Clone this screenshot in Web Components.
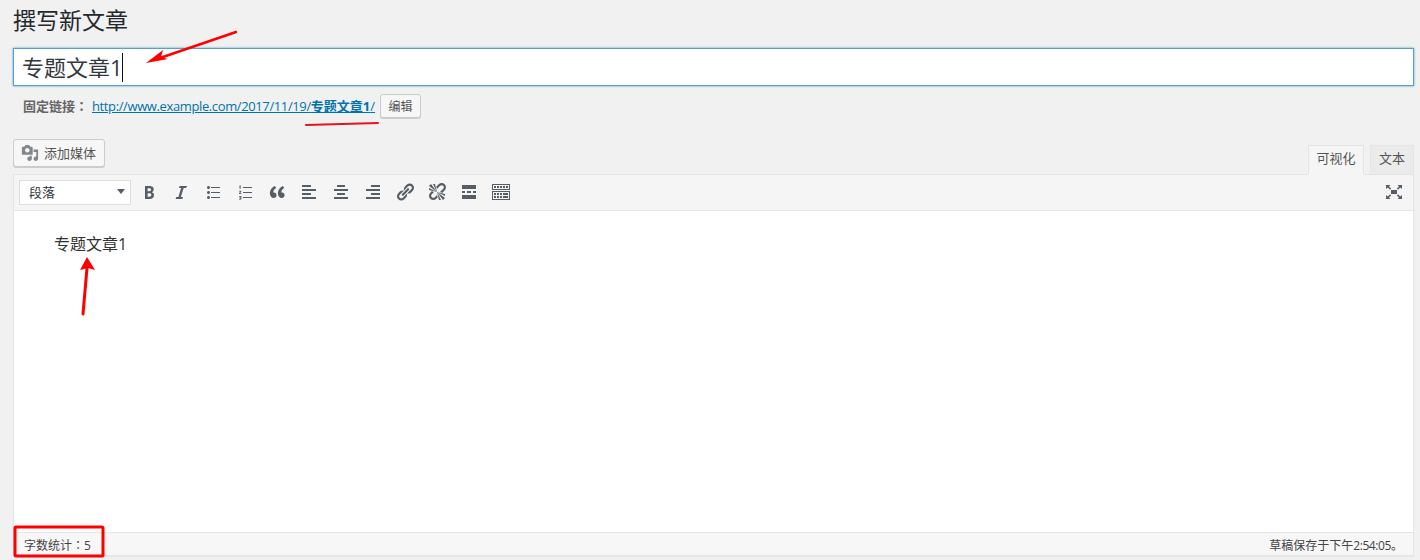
<!DOCTYPE html>
<html lang="zh-CN">
<head>
<meta charset="utf-8">
<title>撰写新文章</title>
<style>
    html, body {
        margin: 0;
        height: 100%;
        background: #f1f1f1;
    }

    body {
        position: relative;
        overflow: hidden;
        color: #444;
        font-family: "Open Sans", "Noto Sans CJK SC", sans-serif;
        font-size: 13px;
    }
</style>
</head>
<body>
<post-page>
    <span slot="heading">撰写新文章</span>
    <post-title>专题文章1</post-title>
    <perma-link base="http://www.example.com/2017/11/19/" slug="专题文章1"></perma-link>
    <post-editor>专题文章1</post-editor>
</post-page>
<red-marks></red-marks>

<script>
// dashicons, 20x20 viewBox
const ICONS = {
    media: 'M13 11V4c0-.55-.45-1-1-1h-1.67L9 1H5L3.67 3H2c-.55 0-1 .45-1 1v7c0 .55.45 1 1 1h10c.55 0 1-.45 1-1zM7 4.5c1.38 0 2.5 1.12 2.5 2.5S8.38 9.5 7 9.5 4.5 8.38 4.5 7 5.62 4.5 7 4.5zM14 6h5v10.5c0 1.38-1.12 2.5-2.5 2.5S14 17.88 14 16.5s1.12-2.5 2.5-2.5c.17 0 .34.02.5.05V9h-3V6zm-4 8.05V13h2v3.5c0 1.38-1.12 2.5-2.5 2.5S7 17.88 7 16.5 8.12 14 9.5 14c.17 0 .34.02.5.05z',
    bold: 'M6 4v13h4.54c1.37 0 2.46-.33 3.26-1 .8-.66 1.2-1.58 1.2-2.77 0-.84-.17-1.51-.51-2.01s-.9-.85-1.67-1.03v-.09c.57-.1 1.02-.4 1.36-.9s.51-1.13.51-1.91c0-1.14-.39-1.98-1.17-2.5C12.75 4.26 11.5 4 9.78 4H6zm2.57 5.15V6.26h1.36c.73 0 1.27.11 1.61.32.34.22.51.58.51 1.07 0 .54-.16.92-.47 1.15s-.82.35-1.51.35h-1.5zm0 2.19h1.6c1.44 0 2.16.53 2.16 1.61 0 .6-.17 1.05-.51 1.34s-.86.43-1.57.43H8.57v-3.38z',
    italic: 'M14.78 6h-2.13l-2.8 9h2.12l-.62 2H4.6l.62-2h2.14l2.8-9H8.03l.62-2h7.75z',
    ul: 'M5.5 7C4.67 7 4 6.33 4 5.5 4 4.68 4.67 4 5.5 4 6.32 4 7 4.68 7 5.5 7 6.33 6.32 7 5.5 7zM8 5h9v1H8V5zm-2.5 7c-.83 0-1.5-.67-1.5-1.5C4 9.68 4.67 9 5.5 9c.82 0 1.5.68 1.5 1.5 0 .83-.68 1.5-1.5 1.5zM8 10h9v1H8v-1zm-2.5 7c-.83 0-1.5-.67-1.5-1.5 0-.82.67-1.5 1.5-1.5.82 0 1.5.68 1.5 1.5 0 .83-.68 1.5-1.5 1.5zM8 15h9v1H8v-1z',
    ol: 'M8 5h9v1H8V5zm0 5h9v1H8v-1zm0 5h9v1H8v-1zM4.5 3.5h1.2v3.2H4.5V3.5zM4 8.8h2.4v.8L5 11.2h1.5v.8H4v-.8l1.4-1.6H4v-.8zM4 14h2.4v3.4H4v-.8h1.4v-.5H4.6v-.7h.8v-.6H4V14z',
    quote: 'M9.49 13.22c0-.74-.2-1.38-.61-1.9-.62-.78-1.83-.88-2.53-.72-.29-1.65 1.11-3.75 2.92-4.65L7.88 4c-2.73 1.3-5.42 4.28-4.96 8.05C3.21 14.43 4.59 16 6.54 16c.85 0 1.56-.25 2.12-.75s.83-1.18.83-2.03zm8.05 0c0-.74-.2-1.38-.61-1.9-.63-.78-1.83-.88-2.53-.72-.29-1.65 1.11-3.75 2.92-4.65L15.93 4c-2.73 1.3-5.42 4.28-4.96 8.05.29 2.38 1.67 3.95 3.62 3.95.85 0 1.56-.25 2.12-.75s.83-1.18.83-2.03z',
    left: 'M12 5V3H3v2h9zm5 4V7H3v2h14zm-5 4v-2H3v2h9zm5 4v-2H3v2h14z',
    center: 'M14 5V3H6v2h8zm3 4V7H3v2h14zm-3 4v-2H6v2h8zm3 4v-2H3v2h14z',
    right: 'M17 5V3H8v2h9zm0 4V7H3v2h14zm0 4v-2H8v2h9zm0 4v-2H3v2h14z',
    link: 'M17.74 2.76c1.68 1.69 1.68 4.41 0 6.1l-1.53 1.52c-1.12 1.12-2.7 1.47-4.14 1.09l2.62-2.61.76-.77.76-.76c.84-.84.84-2.2 0-3.04-.84-.85-2.2-.85-3.04 0l-.77.76-3.38 3.38c-.37-1.44-.02-3.02 1.1-4.14l1.52-1.53c1.69-1.68 4.42-1.68 6.1 0zM8.59 13.43l5.34-5.34c.42-.42.42-1.1 0-1.52-.44-.43-1.13-.39-1.53 0l-5.33 5.34c-.42.42-.42 1.1 0 1.52.44.43 1.13.39 1.52 0zm-.76 2.29l4.14-4.15c.38 1.44.03 3.02-1.09 4.14l-1.52 1.53c-1.69 1.68-4.41 1.68-6.1 0-1.68-1.68-1.68-4.42 0-6.1l1.53-1.52c1.12-1.12 2.7-1.47 4.14-1.1l-4.14 4.15c-.85.84-.85 2.2 0 3.05.84.84 2.2.84 3.04 0z',
    unlink: 'M17.74 2.26c1.68 1.69 1.68 4.41 0 6.1l-1.53 1.52c-.32.33-.69.58-1.08.77L13 10l1.69-1.64.76-.77.76-.76c.84-.84.84-2.2 0-3.04-.84-.85-2.2-.85-3.04 0l-.77.76-.76.76L10 7l-.65-2.14c.19-.38.44-.75.77-1.07l1.52-1.53c1.69-1.68 4.42-1.68 6.1 0zM2 4l8 6-6-8zm4-2l4 8-2-8H6zM2 6l8 4-8-2V6zm7.36 7.69L10 13l.74 2.35-1.38 1.39c-1.69 1.68-4.41 1.68-6.1 0-1.68-1.68-1.68-4.42 0-6.1l1.39-1.38L7 10l-.69.64-1.52 1.53c-.85.84-.85 2.2 0 3.04.84.85 2.2.85 3.04 0zM18 16l-8-6 6 8zm-4 2l-4-8 2 8h2zm4-4l-8-4 8 2v2z',
    more: 'M17 7V3H3v4h14zM6 11V9H3v2h3zm6 0V9H8v2h4zm5 0V9h-3v2h3zm0 6v-4H3v4h14z',
    sink: 'M19 2v6H1V2h18zm-1 5V3H2v4h16zM5 4v2H3V4h2zm3 0v2H6V4h2zm3 0v2H9V4h2zm3 0v2h-2V4h2zm3 0v2h-2V4h2zm2 5v9H1V9h18zm-1 8v-7H2v7h16zM5 11v2H3v-2h2zm3 0v2H6v-2h2zm3 0v2H9v-2h2zm6 0v2h-5v-2h5zM5 14v2H3v-2h2zm3 0v2H6v-2h2zm3 0v2H9v-2h2zm6 0v2h-5v-2h5z',
    expand: 'M7 8h6v4H7zM2 3h4.4L5 4.4l2.2 2.2-1.2 1.2L3.8 5.6 2 7zm16 0v4l-1.8-1.4-2.2 2.2-1.2-1.2L15 4.4 13.6 3zM2 17v-4l1.8 1.4L6 12.2l1.2 1.2L5 15.6 6.4 17zm16 0h-4.4l1.4-1.4-2.2-2.2 1.2-1.2 2.2 2.2L18 13z'
};

function icon(name, size) {
    return `<svg width="${size}" height="${size}" viewBox="0 0 20 20" fill="currentColor" aria-hidden="true"><path d="${ICONS[name]}"/></svg>`;
}

class PostPage extends HTMLElement {
    constructor() {
        super();
        this.attachShadow({ mode: 'open' });
        this.shadowRoot.innerHTML = `
            <style>
                :host {
                    display: block;
                    padding: 0 6px 0 13px;
                }

                h1 {
                    margin: 0 0 12px;
                    height: 36px;
                    padding-top: 1px;
                    box-sizing: border-box;
                    font-size: 23px;
                    font-weight: 400;
                    line-height: 36px;
                    color: #23282d;
                    font-family: "Noto Sans CJK SC", sans-serif;
                }
            </style>
            <h1><slot name="heading"></slot></h1>
            <slot></slot>
        `;
    }
}

class PostTitle extends HTMLElement {
    constructor() {
        super();
        this.attachShadow({ mode: 'open' });
        this.shadowRoot.innerHTML = `
            <style>
                :host {
                    display: flex;
                    align-items: center;
                    height: 38px;
                    box-sizing: border-box;
                    padding-left: 8px;
                    background: #fff;
                    border: 1px solid #5b9dd9;
                    box-shadow: 0 0 2px rgba(30, 140, 190, .8);
                    color: #32373c;
                    font-size: 22px;
                    font-family: "Open Sans", "Noto Sans CJK SC", sans-serif;
                }

                .text {
                    position: relative;
                    top: -1px;
                }

                .caret {
                    width: 1px;
                    height: 29px;
                    margin-left: -1px;
                    background: #111;
                }
            </style>
            <span class="text"><slot></slot></span><span class="caret"></span>
        `;
    }
}

class PermaLink extends HTMLElement {
    constructor() {
        super();
        this.attachShadow({ mode: 'open' });
        this.shadowRoot.innerHTML = `
            <style>
                :host {
                    display: flex;
                    align-items: center;
                    height: 24px;
                    margin-top: 8px;
                    padding-left: 10px;
                    color: #666;
                    font-size: 13px;
                    line-height: 18px;
                    font-family: "Open Sans", "Noto Sans CJK SC", sans-serif;
                }

                .label {
                    width: 69px;
                    font-weight: 700;
                }

                .colon {
                    font-family: "Noto Sans CJK TC", sans-serif;
                }

                a {
                    color: #0073aa;
                }

                .base {
                    letter-spacing: -.38px;
                }

                .slug {
                    font-weight: 700;
                }

                button {
                    width: 41px;
                    height: 24px;
                    margin-left: 5px;
                    padding: 0 0 2px;
                    box-sizing: border-box;
                    background: #f7f7f7;
                    border: 1px solid #ccc;
                    border-radius: 3px;
                    box-shadow: 0 1px 0 #ccc;
                    color: #555;
                    font: 12px "Noto Sans CJK SC", sans-serif;
                }
            </style>
            <span class="label">固定链接<span class="colon" lang="zh-TW">：</span></span>
            <a href="#"><span class="base"></span><span class="slug"></span>/</a>
            <button type="button">编辑</button>
        `;
        this.shadowRoot.querySelector('.base').textContent = this.getAttribute('base');
        this.shadowRoot.querySelector('.slug').textContent = this.getAttribute('slug');
    }
}

class EditorToolbar extends HTMLElement {
    constructor() {
        super();
        this.attachShadow({ mode: 'open' });
        const names = ['bold', 'italic', 'ul', 'ol', 'quote', 'left', 'center', 'right', 'link', 'unlink', 'more', 'sink'];
        this.shadowRoot.innerHTML = `
            <style>
                :host {
                    display: flex;
                    align-items: center;
                    height: 36px;
                    box-sizing: border-box;
                    padding: 0 3px 1px 5px;
                    background: #f5f5f5;
                    border-bottom: 1px solid #e5e5e5;
                    color: #555d66;
                }

                .format {
                    display: flex;
                    align-items: center;
                    justify-content: space-between;
                    width: 112px;
                    height: 25px;
                    box-sizing: border-box;
                    margin-right: 2px;
                    padding: 0 5px 1px 9px;
                    background: #fff;
                    border: 1px solid #ddd;
                    color: #32373c;
                    font: 13px "Noto Sans CJK SC", sans-serif;
                }

                .format i {
                    width: 0;
                    height: 0;
                    border-left: 4px solid transparent;
                    border-right: 4px solid transparent;
                    border-top: 5px solid #555d66;
                }

                .btn {
                    display: flex;
                    align-items: center;
                    justify-content: center;
                    width: 32px;
                    height: 28px;
                }

                .spacer {
                    flex: 1;
                }
            </style>
            <div class="format">段落<i></i></div>
            ${names.map(n => `<span class="btn">${icon(n, 20)}</span>`).join('')}
            <span class="spacer"></span>
            <span class="btn">${icon('expand', 20)}</span>
        `;
    }
}

class PostEditor extends HTMLElement {
    constructor() {
        super();
        this.attachShadow({ mode: 'open' });
        this.shadowRoot.innerHTML = `
            <style>
                :host {
                    display: block;
                    margin-top: 21px;
                }

                .top {
                    display: flex;
                    justify-content: space-between;
                    align-items: flex-end;
                    height: 35px;
                }

                .media {
                    display: flex;
                    align-items: center;
                    gap: 5px;
                    height: 28px;
                    box-sizing: border-box;
                    align-self: flex-start;
                    padding: 0 8px 2px 7px;
                    background: #f7f7f7;
                    border: 1px solid #ccc;
                    border-radius: 3px;
                    box-shadow: 0 1px 0 #ccc;
                    color: #555;
                    font: 13px "Noto Sans CJK SC", sans-serif;
                }

                .media svg {
                    position: relative;
                    top: 1px;
                    color: #82878c;
                }

                .tabs {
                    display: flex;
                    gap: 6px;
                    margin-bottom: -1px;
                    position: relative;
                }

                .tab {
                    display: flex;
                    align-items: center;
                    justify-content: center;
                    height: 30px;
                    box-sizing: border-box;
                    padding-bottom: 5px;
                    border: 1px solid #e5e5e5;
                    background: #ebebeb;
                    color: #555;
                    font: 13px "Noto Sans CJK SC", sans-serif;
                }

                .tab.on {
                    width: 56px;
                    background: #f5f5f5;
                    border-bottom-color: #f5f5f5;
                }

                .tab.off {
                    width: 44px;
                }

                .box {
                    border: 1px solid #e5e5e5;
                    box-shadow: 0 1px 1px rgba(0, 0, 0, .04);
                    background: #fff;
                }

                .content {
                    height: 321px;
                    box-sizing: border-box;
                    padding: 21px 0 0 40px;
                    color: #333;
                    font-size: 16px;
                    line-height: 24px;
                    font-family: "Open Sans", "Noto Sans CJK SC", sans-serif;
                }

                .status {
                    display: flex;
                    justify-content: space-between;
                    align-items: center;
                    height: 23px;
                    box-sizing: border-box;
                    padding: 2px 10px 0;
                    background: #f7f7f7;
                    border-top: 1px solid #e5e5e5;
                    color: #444;
                    font-size: 12px;
                    font-family: "Open Sans", "Noto Sans CJK SC", sans-serif;
                }

                .colon {
                    font-family: "Noto Sans CJK TC", sans-serif;
                }

                .time {
                    letter-spacing: -.4px;
                }
            </style>
            <div class="top">
                <div class="media">${icon('media', 18)}<span>添加媒体</span></div>
                <div class="tabs">
                    <div class="tab on">可视化</div>
                    <div class="tab off">文本</div>
                </div>
            </div>
            <div class="box">
                <editor-toolbar></editor-toolbar>
                <div class="content"><slot></slot></div>
                <div class="status">
                    <span>字数统计<span class="colon" lang="zh-TW">：</span>5</span>
                    <span>草稿保存于下午<span class="time">2:54:05</span>。</span>
                </div>
            </div>
        `;
    }
}

// hand-drawn annotations sitting on top of the screenshot
class RedMarks extends HTMLElement {
    constructor() {
        super();
        this.attachShadow({ mode: 'open' });
        this.shadowRoot.innerHTML = `
            <style>
                :host {
                    position: absolute;
                    inset: 0;
                    pointer-events: none;
                }

                svg {
                    display: block;
                }
            </style>
            <svg width="1420" height="560" viewBox="0 0 1420 560" fill="none">
                <path d="M236 32 L160 58" stroke="#f00" stroke-width="2.4" stroke-linecap="round"/>
                <path d="M146 63 L163 50 L161 57 L168 59 Z" fill="#f00"/>
                <path d="M306 125 L378 123" stroke="#e8141c" stroke-width="2" stroke-linecap="round"/>
                <path d="M83 314 L87 268" stroke="#f00" stroke-width="3" stroke-linecap="round"/>
                <path d="M87 257 L95 270 L88 268 L80 270 Z" fill="#f00"/>
                <rect x="15" y="527" width="88" height="29" rx="1" stroke="#f00" stroke-width="3"/>
            </svg>
        `;
    }
}

customElements.define('post-page', PostPage);
customElements.define('post-title', PostTitle);
customElements.define('perma-link', PermaLink);
customElements.define('editor-toolbar', EditorToolbar);
customElements.define('post-editor', PostEditor);
customElements.define('red-marks', RedMarks);
</script>
</body>
</html>
